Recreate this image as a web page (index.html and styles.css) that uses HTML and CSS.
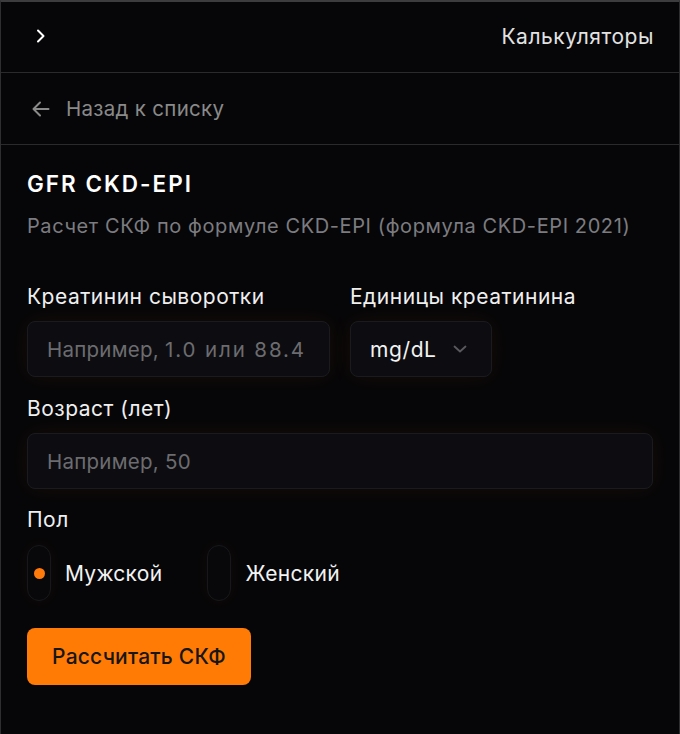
FILE: index.html
```html
<!DOCTYPE html>
<html lang="ru">
<head>
<meta charset="utf-8">
<title>GFR CKD-EPI</title>
<link rel="stylesheet" href="styles.css">
</head>
<body>
<div class="frame">
  <header class="topbar">
    <button class="icon-btn" aria-label="Открыть">
      <svg width="12" height="14" viewBox="0 0 12 14"><path d="M3 1.5 L8.5 7 L3 12.5" fill="none" stroke="#ffffff" stroke-width="2" stroke-linecap="round" stroke-linejoin="round"/></svg>
    </button>
    <div class="topbar-title">Калькуляторы</div>
  </header>
  <div class="backrow">
    <svg class="back-arrow" width="18" height="16" viewBox="0 0 18 16"><path d="M16.5 8 H2 M8 1.5 L1.5 8 L8 14.5" fill="none" stroke="#8a8a8a" stroke-width="2" stroke-linecap="round" stroke-linejoin="round"/></svg>
    <span>Назад к списку</span>
  </div>
  <main class="content">
    <h1 class="title">GFR CKD-EPI</h1>
    <p class="subtitle">Расчет СКФ по формуле CKD-EPI (формула CKD-EPI 2021)</p>

    <div class="row">
      <div class="field grow">
        <label class="label">Креатинин сыворотки</label>
        <div class="input placeholder">Например, <span class="num">1.0 или 88.4</span></div>
      </div>
      <div class="field">
        <label class="label">Единицы креатинина</label>
        <div class="input select">
          <span class="select-value">mg/dL</span>
          <svg width="14" height="8" viewBox="0 0 14 8"><path d="M1.5 1.5 L7 6.5 L12.5 1.5" fill="none" stroke="#5a5a5e" stroke-width="1.8" stroke-linecap="round" stroke-linejoin="round"/></svg>
        </div>
      </div>
    </div>

    <div class="field age">
      <label class="label">Возраст (лет)</label>
      <div class="input placeholder">Например, 50</div>
    </div>

    <div class="field sex">
      <label class="label">Пол</label>
      <div class="radios">
        <div class="radio-item"><span class="radio checked"><span class="dot"></span></span><span class="radio-label">Мужской</span></div>
        <div class="radio-item"><span class="radio"></span><span class="radio-label">Женский</span></div>
      </div>
    </div>

    <button class="primary">Рассчитать СКФ</button>
  </main>
</div>
</body>
</html>
```
FILE: styles.css
```css
* { box-sizing: border-box; }
html, body {
  margin: 0;
  padding: 0;
  background: #060608;
  height: 100%;
}
body {
  font-family: Inter, "Noto Sans", sans-serif;
  color: #ededed;
}
.frame {
  height: 734px;
  border-top: 2px solid #3c3c3e;
  border-left: 1px solid #2e2e30;
  border-right: 1px solid #2e2e30;
  background: #060608;
  overflow: hidden;
}
.topbar {
  height: 71px;
  display: flex;
  align-items: center;
  justify-content: space-between;
  padding: 0 25px 2px 32px;
  border-bottom: 1px solid #2a2a2c;
}
.icon-btn {
  background: none;
  border: 0;
  padding: 0;
  width: 16px;
  height: 16px;
  display: flex;
  align-items: center;
  justify-content: center;
  cursor: pointer;
}
.topbar-title {
  font-size: 21px;
  letter-spacing: 0.55px;
  color: #e2e2e2;
}
.backrow {
  height: 72px;
  display: flex;
  align-items: center;
  gap: 16px;
  padding: 0 31px;
  border-bottom: 1px solid #2a2a2c;
  color: #8a8a8a;
  font-size: 20.5px;
  letter-spacing: 0.3px;
}
.content {
  padding: 24px 26px 0 26px;
}
.title {
  margin: 0;
  font-size: 22.5px;
  font-weight: 600;
  letter-spacing: 2px;
  color: #ffffff;
  line-height: 30px;
}
.subtitle {
  margin: 14px 0 0;
  font-size: 20px;
  letter-spacing: 0.6px;
  color: #7c7c80;
  line-height: 26px;
}
.row {
  display: flex;
  gap: 20px;
  margin-top: 45px;
}
.field { display: flex; flex-direction: column; }
.grow { width: 303px; }
.label {
  font-size: 21px;
  letter-spacing: 0.5px;
  line-height: 26px;
  color: #efefef;
  margin-bottom: 11px;
}
.input {
  height: 56px;
  border-radius: 8px;
  background: #0d0d11;
  border: 1px solid #1b1b1f;
  box-shadow: 0 0 22px rgba(255, 122, 0, 0.07);
  display: flex;
  align-items: center;
  padding: 0 19px;
  font-size: 20.5px;
  letter-spacing: 0.25px;
  white-space: pre;
}
.placeholder { color: #6c6c70; }
.num { letter-spacing: 1.9px; }
.select {
  width: 142px;
  justify-content: space-between;
  padding-right: 24px;
}
.select-value { color: #f2f2f2; font-size: 21px; letter-spacing: 0.6px; }
.age { margin-top: 19px; }
.sex { margin-top: 18px; }
.radios {
  display: flex;
  gap: 45px;
  margin-top: 1px;
}
.radio-item {
  display: flex;
  align-items: center;
  gap: 14px;
}
.radio {
  width: 24px;
  height: 56px;
  border-radius: 12px;
  border: 1px solid #18181c;
  background: #08080b;
  box-shadow: 0 0 18px rgba(255, 122, 0, 0.06);
  display: flex;
  align-items: center;
  justify-content: center;
}
.dot {
  width: 11px;
  height: 11px;
  border-radius: 50%;
  background: #ff7a0a;
}
.radio-label {
  font-size: 21px;
  letter-spacing: 0.3px;
  color: #f2f2f2;
}
.primary {
  margin-top: 27px;
  height: 57px;
  width: 224px;
  border: 0;
  border-radius: 8px;
  background: #ff7b06;
  color: #161616;
  font-family: Inter, "Noto Sans", sans-serif;
  font-size: 21px;
  letter-spacing: 0.2px;
  font-weight: 500;
  cursor: pointer;
}
```
